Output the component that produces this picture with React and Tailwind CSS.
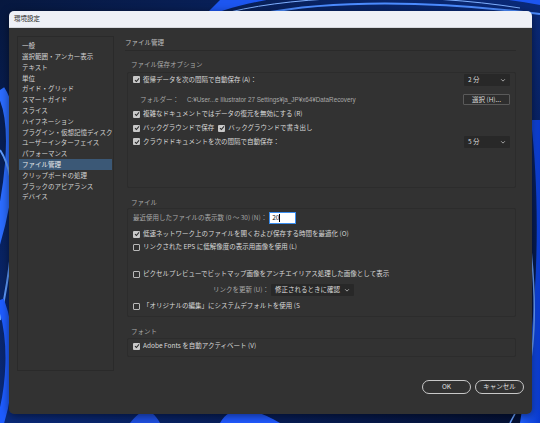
import React from "react";

const jp = { fontFamily: '"Noto Sans CJK JP", "Noto Sans", sans-serif' };

const sideItems = [
  "一般",
  "選択範囲・アンカー表示",
  "テキスト",
  "単位",
  "ガイド・グリッド",
  "スマートガイド",
  "スライス",
  "ハイフネーション",
  "プラグイン・仮想記憶ディスク",
  "ユーザーインターフェイス",
  "パフォーマンス",
  "ファイル管理",
  "クリップボードの処理",
  "ブラックのアピアランス",
  "デバイス",
];

function Check({ on }) {
  return (
    <span
      className={
        "w-[7px] h-[7px] shrink-0 flex items-center justify-center rounded-[1px] " +
        (on ? "bg-[#c8c8c8]" : "border border-[#b8b8b8]")
      }
    >
      {on && (
        <svg viewBox="0 0 8 8" className="w-[6px] h-[6px]">
          <path d="M1.3 4.2 L3.2 6 L6.7 1.8" fill="none" stroke="#2a2a2a" strokeWidth="1.4" />
        </svg>
      )}
    </span>
  );
}

function Chevron() {
  return (
    <svg viewBox="0 0 8 8" className="w-[6px] h-[6px] shrink-0">
      <path d="M1.5 3 L4 5.5 L6.5 3" fill="none" stroke="#bdbdbd" strokeWidth="1.1" />
    </svg>
  );
}

function Select({ value, className }) {
  return (
    <div
      className={
        "h-[12px] flex items-center justify-between pl-[4px] pr-[4px] bg-[#282828] rounded-[1px] text-[6.5px] text-[#dcdcdc] whitespace-nowrap " +
        className
      }
    >
      <span>{value}</span>
      <Chevron />
    </div>
  );
}

function CheckRow({ on, children, className = "" }) {
  return (
    <div className={"flex items-center gap-[2px] text-[6.5px] text-[#d9d9d9] whitespace-nowrap " + className}>
      <Check on={on} />
      <span className="ml-[1px]">{children}</span>
    </div>
  );
}

function Wallpaper() {
  return (
    <svg viewBox="0 0 540 423" className="absolute inset-0 w-full h-full" preserveAspectRatio="none">
      <defs>
        <linearGradient id="bg" x1="0" y1="0" x2="1" y2="1">
          <stop offset="0" stopColor="#07183f" />
          <stop offset="0.5" stopColor="#0a2a7a" />
          <stop offset="1" stopColor="#041033" />
        </linearGradient>
        <linearGradient id="sw" x1="0" y1="0" x2="1" y2="0">
          <stop offset="0" stopColor="#1f5fff" />
          <stop offset="1" stopColor="#0a3bd0" />
        </linearGradient>
      </defs>
      <rect width="540" height="423" fill="url(#bg)" />
      <path d="M200 20 C260 -10 400 -20 540 5 L540 0 L220 0 Z" fill="#1d56f0" />
      <path d="M230 12 C300 -5 420 -8 520 8" stroke="#7fb0ff" strokeWidth="1" fill="none" />
      <path d="M260 14 C330 0 430 0 540 14" stroke="#4c8cff" strokeWidth="2" fill="none" />
      <path d="M0 90 C20 120 10 200 -10 260" stroke="#2b6cff" strokeWidth="10" fill="none" />
      <path d="M0 150 C20 180 15 250 0 320" stroke="#5f9cff" strokeWidth="2" fill="none" />
      <path d="M0 300 C15 340 10 390 0 423" stroke="#1e5cff" strokeWidth="8" fill="none" />
      <path d="M130 423 C140 410 150 405 160 423 Z" fill="#1e4fe0" />
      <path d="M220 423 C230 405 250 405 280 423 Z" fill="#2059ff" />
      <path d="M531 120 C540 200 540 300 520 423 L540 423 L540 120 Z" fill="url(#sw)" />
      <path d="M531 250 C538 320 535 380 510 423" stroke="#6aa2ff" strokeWidth="1.5" fill="none" />
    </svg>
  );
}

export default function App() {
  return (
    <div className="relative w-[540px] h-[423px] overflow-hidden bg-[#07183f]" style={jp}>
      <Wallpaper />
      <div className="absolute left-[9px] top-[11px] w-[523px] h-[403px] rounded-[5px] overflow-hidden flex flex-col shadow-[0_2px_8px_rgba(0,0,0,0.5)]">
        <div className="h-[17px] bg-[#eef0f6] flex items-center pl-[5px] text-[6.5px] text-[#222] border-b border-[#d6d8de]">
          環境設定
        </div>
        <div className="flex-1 bg-[#323232] flex flex-col">
          <div className="flex flex-1 pl-[8px] pr-[16px] pt-[8px]">
            {/* sidebar */}
            <div className="w-[97px] h-[335px] border border-[#2a2a2a] pt-[3px] px-[1px]">
              {sideItems.map((t) => (
                <div
                  key={t}
                  className={
                    "h-[10.8px] flex items-center pl-[3px] text-[6.5px] leading-none whitespace-nowrap " +
                    (t === "ファイル管理" ? "bg-[#3b5876] text-[#e8e8e8]" : "text-[#d4d4d4]")
                  }
                >
                  {t}
                </div>
              ))}
            </div>

            {/* content */}
            <div className="flex-1 ml-[11px] flex flex-col">
              <div className="h-[15px] border-b border-[#2a2a2a] flex items-center text-[6.5px] text-[#bdbdbd]">
                ファイル管理
              </div>

              <div className="h-[21px] flex items-end pb-[3px] pl-[6px] text-[6.5px] leading-[10px] text-[#a8a8a8]">
                ファイル保存オプション
              </div>
              <div className="ml-[2px] h-[116px] border border-[#2c2c2c] rounded-[2px] pl-[5px] pr-[5px] flex flex-col">
                <div className="h-[13px] flex items-center justify-between">
                  <CheckRow on>復帰データを次の間隔で自動保存 (A)：</CheckRow>
                  <Select value="2 分" className="w-[46px]" />
                </div>
                <div className="h-[15px] mt-[6px] flex items-center justify-between">
                  <div className="pl-[7px] text-[6.5px] text-[#a8a8a8] flex items-center gap-[8px] whitespace-nowrap">
                    <span>フォルダー：</span>
                    <span
                      className="text-[6.3px]"
                      style={{ fontFamily: '"Liberation Sans", "Noto Sans CJK JP", sans-serif' }}
                    >
                      C:¥User...e Illustrator 27 Settings¥ja_JP¥x64¥DataRecovery
                    </span>
                  </div>
                  <div className="w-[47px] h-[11px] border border-[#5a5a5a] bg-[#2e2e2e] rounded-[1px] flex items-center justify-center text-[6.5px] text-[#dcdcdc] whitespace-nowrap">
                    選択 (H)...
                  </div>
                </div>
                <div className="h-[14px] flex items-center">
                  <CheckRow on>複雑なドキュメントではデータの復元を無効にする (R)</CheckRow>
                </div>
                <div className="h-[14px] flex items-center gap-[4px]">
                  <CheckRow on>バックグラウンドで保存</CheckRow>
                  <CheckRow on>バックグラウンドで書き出し</CheckRow>
                </div>
                <div className="h-[13px] flex items-center justify-between">
                  <CheckRow on>クラウドドキュメントを次の間隔で自動保存：</CheckRow>
                  <Select value="5 分" className="w-[46px]" />
                </div>
              </div>

              <div className="h-[20px] flex items-end pb-[1px] pl-[6px] text-[6.5px] leading-[10px] text-[#a8a8a8]">
                ファイル
              </div>
              <div className="ml-[2px] h-[109px] border border-[#2c2c2c] rounded-[2px] pl-[5px] pr-[5px] pt-[3px] flex flex-col">
                <div className="h-[12px] flex items-center text-[6.5px] text-[#a8a8a8] whitespace-nowrap">
                  <span>最近使用したファイルの表示数 (0 〜 30) (N)：</span>
                  <div className="ml-[2px] w-[27px] h-[12px] bg-white border border-[#3a8ef0] flex items-center pl-[2px] text-[6.5px] text-[#111]">
                    20<span className="w-[0.5px] h-[8px] bg-black" />
                  </div>
                </div>
                <CheckRow on className="h-[12px] mt-[4px]">
                  低速ネットワーク上のファイルを開くおよび保存する時間を最適化 (O)
                </CheckRow>
                <CheckRow className="h-[12px] mt-[1px]">リンクされた EPS に低解像度の表示用画像を使用 (L)</CheckRow>
                <CheckRow className="h-[12px] mt-[15px]">
                  ピクセルプレビューでビットマップ画像をアンチエイリアス処理した画像として表示
                </CheckRow>
                <div className="h-[12px] mt-[4px] flex items-center">
                  <span className="w-[138px] text-right pr-[2px] text-[6.5px] text-[#a8a8a8] whitespace-nowrap">
                    リンクを更新 (U)：
                  </span>
                  <Select value="修正されるときに確認" className="w-[83px]" />
                </div>
                <CheckRow className="h-[12px] mt-[4px]">「オリジナルの編集」にシステムデフォルトを使用 (S</CheckRow>
              </div>

              <div className="h-[21px] flex items-end pb-[2px] pl-[6px] text-[6.5px] leading-[10px] text-[#a8a8a8]">
                フォント
              </div>
              <div className="ml-[2px] h-[19px] border border-[#2c2c2c] rounded-[2px] pl-[5px] pt-[1px] flex flex-col">
                <CheckRow on className="h-[12px]">Adobe Fonts を自動アクティベート (V)</CheckRow>
              </div>
            </div>
          </div>

          <div className="h-[34px] flex items-start justify-end gap-[4px] pr-[8px]">
            <button className="w-[49px] h-[14px] rounded-full border-[1.5px] border-[#c8c8c8] text-[6.5px] text-[#e0e0e0] flex items-center justify-center">
              OK
            </button>
            <button className="w-[49px] h-[14px] rounded-full border-[1.5px] border-[#c8c8c8] text-[6.5px] text-[#e0e0e0] flex items-center justify-center">
              キャンセル
            </button>
          </div>
        </div>
      </div>
    </div>
  );
}
